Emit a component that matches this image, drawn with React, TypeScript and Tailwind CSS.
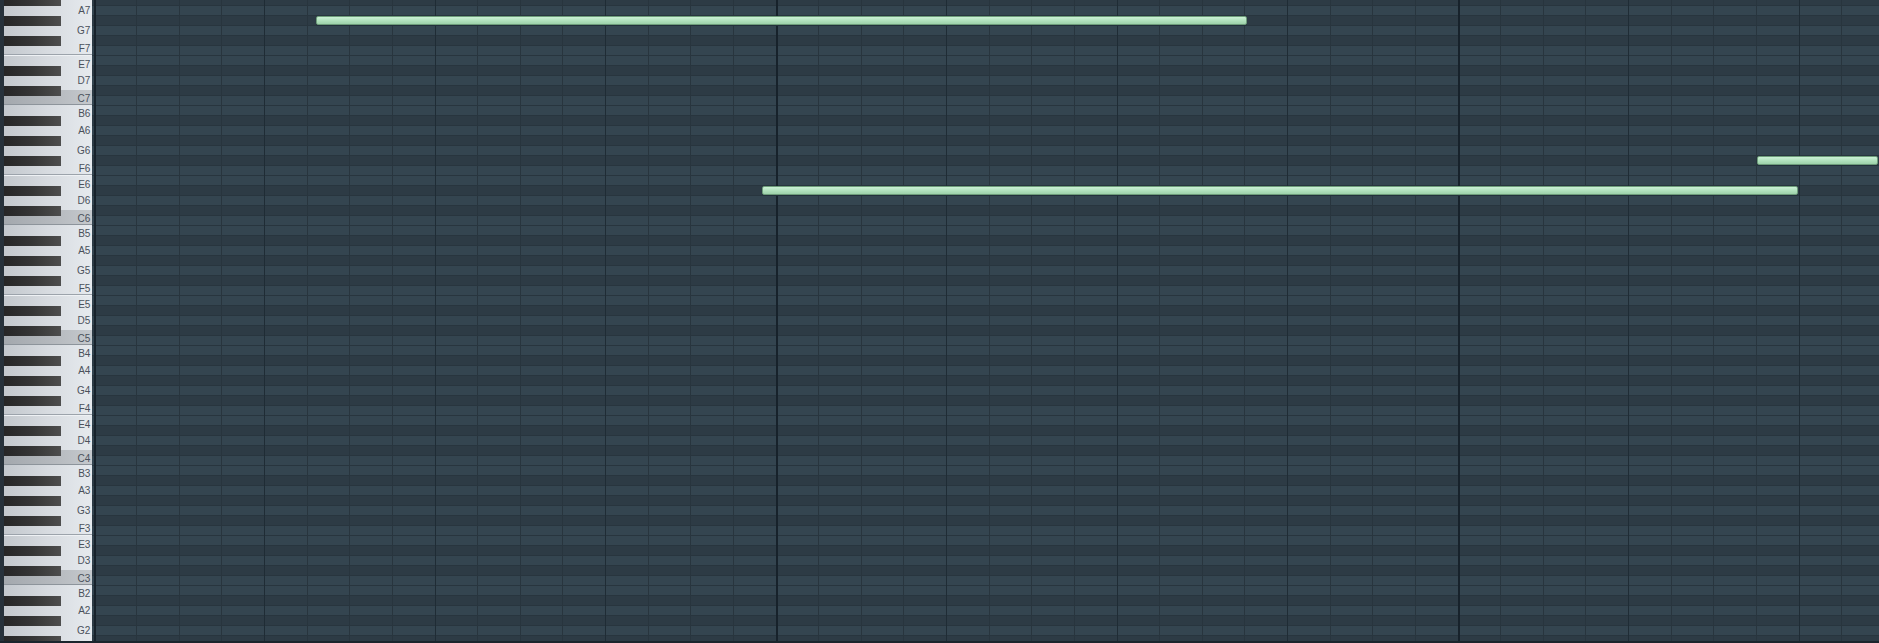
import React from "react";

const NAMES = ["B", "A#", "A", "G#", "G", "F#", "F", "E", "D#", "D", "C#", "C"];

type Row = { name: string; black: boolean };

function buildRows(): Row[] {
  const list: Row[] = [];
  let idx = 1;
  let oct = 7;
  for (let i = 0; i < 65; i++) {
    const n = NAMES[idx];
    list.push({ name: n + oct, black: n.includes("#") });
    idx++;
    if (idx === 12) {
      idx = 0;
      oct--;
    }
  }
  return list;
}

const ROWS = buildRows();
const OCTAVES = [7, 6, 5, 4, 3, 2];
const BLACK_TOPS = ["top-[11px]", "top-[31px]", "top-[51px]", "top-[81px]", "top-[101px]"];

type WhiteKey = { n: string; cls: string };

const WHITE_KEYS: WhiteKey[] = [
  { n: "B", cls: "h-[17px] pt-[4px]" },
  { n: "A", cls: "h-[17px] pt-[4px]" },
  { n: "G", cls: "h-[18px] pt-[7px]" },
  { n: "F", cls: "h-[18px] pt-[7px] border-b border-[#9ca3ab]" },
  { n: "E", cls: "h-[17px] pt-[4px] border-t border-[#eef1f4]" },
  { n: "D", cls: "h-[18px] pt-[4px]" },
  {
    n: "C",
    cls: "h-[15px] pt-[4px] border-b border-[#8d949b] bg-gradient-to-r from-[#a3a8ad] via-[#b3b7bc] to-[#c5c9cd]",
  },
];

function visible(o: number, n: string) {
  if (o === 7 && n === "B") return false;
  if (o === 2 && n !== "B" && n !== "A" && n !== "G") return false;
  return true;
}

function Octave({ o }: { o: number }) {
  return (
    <div className="relative h-[120px] shrink-0 flex flex-col bg-gradient-to-r from-[#c3c8cd] via-[#d7dbe0] to-[#e6eaee]">
      {WHITE_KEYS.map((k) => (
        <div key={k.n} className={`flex shrink-0 justify-end pr-[2px] box-border ${k.cls}`}>
          {visible(o, k.n) && (
            <span
              className="h-[10px] leading-[10px] text-[10px] text-[#4a515b] tracking-[-0.2px]"
              style={{ fontFamily: '"Liberation Sans", Arial, sans-serif' }}
            >
              {k.n + o}
            </span>
          )}
        </div>
      ))}
      {BLACK_TOPS.map((c, i) => (
        <div
          key={i}
          className={`absolute left-0 w-[57px] h-[10px] bg-gradient-to-r from-[#262626] via-[#363636] to-[#4e4e4e] ${c}`}
        />
      ))}
    </div>
  );
}

function colClass(i: number) {
  if (i % 16 === 0) return "w-[42.64px] shrink-0 border-l-2 border-[#17222b]";
  if (i % 4 === 0) return "w-[42.64px] shrink-0 border-l border-[#1f2c35]";
  return "w-[42.64px] shrink-0 border-l border-[#28353e]";
}

const noteCls =
  "absolute h-[9px] rounded-[2px] border border-[#6d9c7a] bg-gradient-to-b from-[#cbf1d5] via-[#b2e2be] to-[#9dd1aa] shadow-[0_1px_0_#22303a]";

export default function App() {
  const cols = Array.from({ length: 43 }, (_, i) => i);
  return (
    <div className="w-[1879px] h-[643px] flex flex-col bg-[#1b252d] overflow-hidden">
      <div className="h-[641px] flex overflow-hidden">
        <div className="w-[92px] shrink-0 pl-[4px] bg-[#27323b] overflow-hidden">
          <div className="-mt-[15px] flex flex-col">
            {OCTAVES.map((o) => (
              <Octave key={o} o={o} />
            ))}
          </div>
        </div>
        <div className="relative flex-1 overflow-hidden bg-[#2d3b45]">
          <div className="-mt-[5px] flex flex-col">
            {ROWS.map((r) => (
              <div
                key={r.name}
                className={
                  r.black
                    ? "h-[10px] shrink-0 border-t border-[#28353e] bg-[#2d3b45]"
                    : "h-[10px] shrink-0 border-t border-[#28353e] bg-[#344550]"
                }
              />
            ))}
          </div>
          <div className="absolute top-0 bottom-0 left-[1.5px] flex">
            {cols.map((i) => (
              <div key={i} className={colClass(i)} />
            ))}
          </div>
          <div className={`${noteCls} left-[224px] w-[931px] top-[16px]`} />
          <div className={`${noteCls} left-[670px] w-[1036px] top-[186px]`} />
          <div className={`${noteCls} left-[1665px] w-[121px] top-[156px]`} />
        </div>
      </div>
      <div className="h-[2px] bg-[#1b252d]" />
    </div>
  );
}
